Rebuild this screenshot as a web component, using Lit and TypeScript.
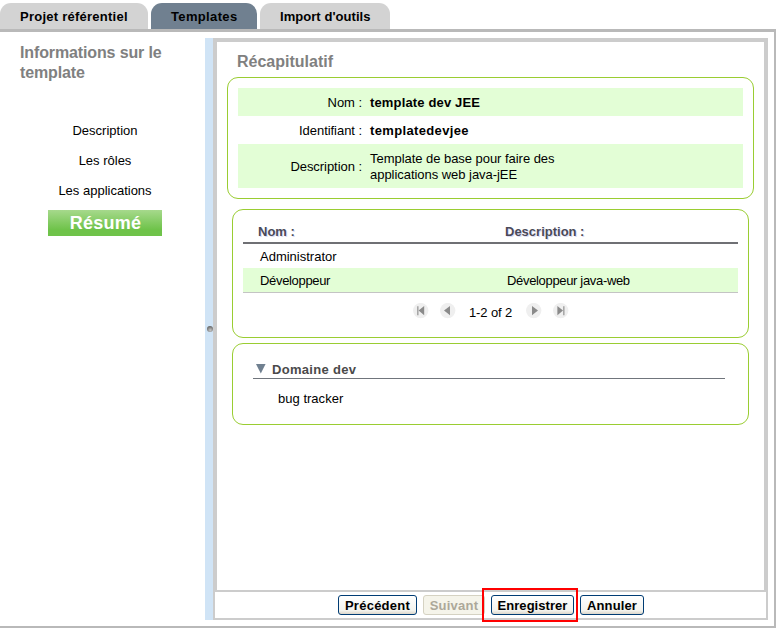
import { LitElement, html, css, svg } from "lit";
import { customElement, property } from "lit/decorators.js";
import { classMap } from "lit/directives/class-map.js";

const pagerShapes: Record<string, unknown> = {
  first: svg`<path d="M4 3.2h1.6v9H4z" fill="#a8a8a8"/><path d="M11.2 3v9.2L5.6 7.6z" fill="#8a8a8a"/>`,
  previous: svg`<path d="M10 3v9.2L4 7.6z" fill="#8a8a8a"/>`,
  next: svg`<path d="M6 3v9.2L12 7.6z" fill="#8a8a8a"/>`,
  last: svg`<path d="M10 3.2h1.6v9H10z" fill="#a8a8a8"/><path d="M4.4 3v9.2L10 7.6z" fill="#8a8a8a"/>`,
};

@customElement("pager-icon")
class PagerIcon extends LitElement {
  @property() kind = "first";
  static styles = css`
    :host { display: block; width: 16px; height: 16px; }
    svg { display: block; }
  `;
  render() {
    return html`<svg width="16" height="16" viewBox="0 0 16 16">
      <circle cx="7.7" cy="7.6" r="7.7" fill="#efefef" />
      ${pagerShapes[this.kind]}
    </svg>`;
  }
}

@customElement("app-root")
class AppRoot extends LitElement {
  static styles = css`
    :host {
      display: block;
      position: relative;
      box-sizing: border-box;
      width: 779px;
      height: 628px;
      overflow: hidden;
      background: #fff;
      color: #000;
      font: 13px/16px "Liberation Sans", Arial, sans-serif;
    }
    * { box-sizing: border-box; }
    .tabs { display: flex; gap: 3px; height: 29px; padding-top: 3px; }
    .tab {
      width: 148px;
      height: 26px;
      padding-left: 20px;
      border-radius: 11px 11px 0 0;
      background: #d3d3d3;
      font-weight: bold;
      line-height: 27px;
      letter-spacing: 0.25px;
      white-space: nowrap;
    }
    .tab.active { width: 106px; background: #708090; letter-spacing: 0.35px; }
    .tab.last { width: 130px; letter-spacing: 0.05px; }
    .body {
      display: flex;
      width: 776px;
      height: 599px;
      border: solid #b9b9b9;
      border-width: 3px 2px 2px 0;
      padding: 6px 6px 6px 0;
    }
    .side { width: 205px; height: 582px; }
    .side-title {
      margin: 5px 0 0 20px;
      width: 160px;
      font-size: 16px;
      font-weight: bold;
      line-height: 20px;
      letter-spacing: -0.13px;
      color: #808080;
    }
    .nav {
      display: flex;
      flex-direction: column;
      align-items: center;
      margin-top: 33px;
      padding-left: 5px;
    }
    .nav-item { height: 30px; line-height: 30px; white-space: nowrap; }
    .nav-item.current {
      width: 114px;
      height: 26px;
      margin-top: 4px;
      padding-left: 1px;
      background: linear-gradient(#a6d98c, #6fc34a 75%);
      color: #fff;
      font-size: 18px;
      font-weight: bold;
      line-height: 26px;
      letter-spacing: 0.25px;
      text-align: center;
    }
    .splitter {
      display: flex;
      align-items: center;
      justify-content: center;
      width: 8px;
      height: 582px;
      background: #d0e4f6;
    }
    .grip {
      width: 6px;
      height: 6px;
      margin-left: 1px;
      border-radius: 50%;
      background: radial-gradient(circle at 55% 70%, #c8c8c8, #666 75%);
    }
    .frame { width: 555px; height: 582px; border: 2px solid #ccc; }
    .content {
      width: 551px;
      height: 552px;
      border: 2px solid #ccc;
      padding: 9px 11px 0 10px;
    }
    .heading {
      padding-left: 10px;
      height: 26px;
      font-size: 16px;
      font-weight: bold;
      line-height: 22px;
      color: #808080;
    }
    .card { border: 1px solid #9acd32; border-radius: 11px; }
    .summary { width: 527px; height: 122px; padding: 10px; }
    .field {
      display: grid;
      grid-template-columns: 124px 1fr;
      column-gap: 8px;
      align-items: center;
      height: 28px;
      padding-top: 2px;
    }
    .field.shaded { background: #e3fed6; }
    .field.tall { height: 44px; }
    .label { text-align: right; white-space: nowrap; letter-spacing: -0.05px; }
    .value { width: 200px; letter-spacing: -0.04px; }
    .value.strong { font-weight: bold; letter-spacing: 0.15px; }
    .value.ident { letter-spacing: 0.35px; }
    .roles { width: 517px; height: 129px; margin: 10px 0 0 5px; padding: 10px; }
    .row {
      display: grid;
      grid-template-columns: 247px 1fr;
      height: 24px;
      padding-left: 17px;
      line-height: 25px;
    }
    .row.head {
      padding-left: 15px;
      height: 24px;
      border-bottom: 2px solid #6f7074;
      color: #4a4a58;
      font-weight: bold;
      line-height: 23px;
      text-shadow: 1px 1px 0 #dcdcf4;
    }
    .row.shaded {
      height: 25px;
      background: #e3fed6;
      border-bottom: 1px solid #c4c4c4;
      letter-spacing: -0.33px;
    }
    .pager { display: flex; padding: 10px 0 0 170px; }
    .count {
      width: 43px;
      margin: 1px 14px 0 13px;
      line-height: 17px;
      letter-spacing: -0.12px;
      white-space: nowrap;
    }
    .icon-pair { display: flex; gap: 11px; }
    .domain { width: 517px; height: 82px; margin: 5px 0 0 5px; padding: 15px 23px 0 20px; }
    .domain-head {
      display: flex;
      gap: 6px;
      height: 20px;
      padding-left: 3px;
      border-bottom: 1px solid #70757c;
      color: #4a4a4a;
      font-weight: bold;
      line-height: 21px;
      letter-spacing: 0.3px;
    }
    .arrow { display: block; width: 10px; height: 10px; margin-top: 5px; }
    .domain-item { padding: 12px 0 0 25px; letter-spacing: 0.02px; }
    .actions { display: flex; gap: 6px; height: 26px; padding: 3px 0 0 123px; }
    .btn {
      width: 79px;
      height: 20px;
      border: 1px solid #003c74;
      border-radius: 3px;
      padding: 1px 0 0;
      background: linear-gradient(#fff, #f3f3ee 80%, #dcd7cb);
      color: #000;
      font: bold 13px/17px "Liberation Sans", Arial, sans-serif;
      letter-spacing: 0.25px;
      text-align: center;
      white-space: nowrap;
    }
    .btn.off { width: 62px; border-color: #d5d2c2; background: #f5f4ea; color: #aca899; }
    .btn.save { width: 83px; letter-spacing: 0.05px; }
    .btn.cancel { width: 64px; letter-spacing: 0.15px; }
    .marker {
      position: absolute;
      left: 482px;
      top: 588px;
      width: 96px;
      height: 34px;
      border: 2px solid #f00;
    }
  `;

  private tabs = [
    { text: "Projet référentiel", active: false, last: false },
    { text: "Templates", active: true, last: false },
    { text: "Import d'outils", active: false, last: true },
  ];

  private steps = ["Description", "Les rôles", "Les applications", "Résumé"];

  private buttons = [
    { text: "Précédent", off: false, save: false, cancel: false },
    { text: "Suivant", off: true, save: false, cancel: false },
    { text: "Enregistrer", off: false, save: true, cancel: false },
    { text: "Annuler", off: false, save: false, cancel: true },
  ];

  render() {
    return html`
      <div class="tabs">
        ${this.tabs.map((t) => html`<div class=${classMap({ tab: true, active: t.active, last: t.last })}>${t.text}</div>`)}
      </div>
      <div class="body">
        <div class="side">
          <div class="side-title">Informations sur le template</div>
          <div class="nav">
            ${this.steps.map((s) => html`<div class=${classMap({ "nav-item": true, current: s === "Résumé" })}>${s}</div>`)}
          </div>
        </div>
        <div class="splitter"><div class="grip"></div></div>
        <div class="frame">
          <div class="content">
            <div class="heading">Récapitulatif</div>
            <div class="card summary">
              <div class="field shaded">
                <div class="label">Nom :</div><div class="value strong">template dev JEE</div>
              </div>
              <div class="field">
                <div class="label">Identifiant :</div><div class="value strong ident">templatedevjee</div>
              </div>
              <div class="field shaded tall">
                <div class="label">Description :</div><div class="value">Template de base pour faire des applications web java-jEE</div>
              </div>
            </div>
            <div class="card roles">
              <div class="row head"><div>Nom :</div><div>Description :</div></div>
              <div class="row"><div>Administrator</div><div></div></div>
              <div class="row shaded"><div>Développeur</div><div>Développeur java-web</div></div>
              <div class="pager">
                <div class="icon-pair"><pager-icon kind="first"></pager-icon><pager-icon kind="previous"></pager-icon></div>
                <div class="count">1-2 of 2</div>
                <div class="icon-pair"><pager-icon kind="next"></pager-icon><pager-icon kind="last"></pager-icon></div>
              </div>
            </div>
            <div class="card domain">
              <div class="domain-head">
                <svg class="arrow" viewBox="0 0 10 10"><path d="M0 0h9.6L4.8 9.4z" fill="#708090" /></svg>
                <span>Domaine dev</span>
              </div>
              <div class="domain-item">bug tracker</div>
            </div>
          </div>
          <div class="actions">
            ${this.buttons.map(
              (b) => html`<button class=${classMap({ btn: true, off: b.off, save: b.save, cancel: b.cancel })} ?disabled=${b.off}>${b.text}</button>`,
            )}
          </div>
        </div>
      </div>
      <div class="marker"></div>
    `;
  }
}
